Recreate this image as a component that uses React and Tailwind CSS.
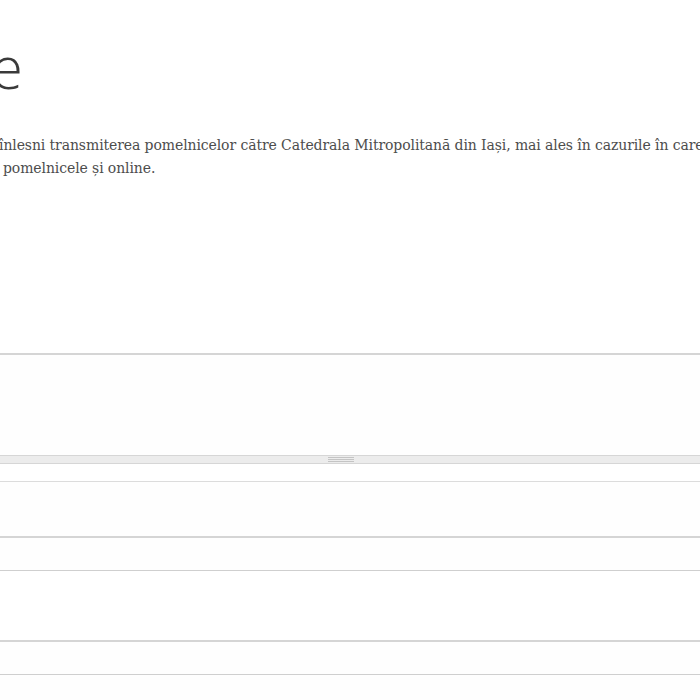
export default function App() {
  return (
    <div className="w-[700px] h-[700px] overflow-hidden bg-white">
      {/* page header, scrolled so the left edge is off-screen */}
      <h1 className="-ml-[9px] pt-[31px] h-[134px] text-[58px] leading-[72px] font-light text-[#3a3a3a] font-['Open_Sans',sans-serif]">
        e
      </h1>

      <div className="whitespace-nowrap text-[14px] leading-[23px] tracking-[-0.1px] text-[#4d4d4d] font-['DejaVu_Serif',serif]">
        <p className="-ml-px">
          înlesni transmiterea pomelnicelor către Catedrala Mitropolitană din Iași, mai ales în cazurile în care
        </p>
        <p className="ml-[3px]">pomelnicele și online.</p>
      </div>

      {/* form fields, wider than the viewport */}
      <div className="-mx-8 mt-[173px]">
        <div className="border-t-2 border-[#d5d5d5] bg-[#fefefe] h-[102px]" />
        <div className="h-[9px] bg-[#ececec] border-y border-[#d6d6d6] flex items-center justify-center">
          <div className="flex flex-col gap-px -ml-[18px]">
            <span className="block w-[26px] h-px bg-[#c4c4c4]" />
            <span className="block w-[26px] h-px bg-[#c4c4c4]" />
            <span className="block w-[26px] h-px bg-[#c4c4c4]" />
          </div>
        </div>
        <div className="h-[17px]" />
        <div className="border-t border-[#dcdcdc] h-[55px] bg-[#fefefe]" />
        <div className="border-t-2 border-[#d5d5d5] h-[34px] bg-[#fefefe]" />
        <div className="border-t border-[#cfcfcf] h-[70px]" />
        <div className="border-t-2 border-[#d5d5d5] h-[34px] bg-[#fefefe]" />
        <div className="border-t border-[#cfcfcf] h-[30px] bg-[#fefefe]" />
      </div>
    </div>
  );
}
